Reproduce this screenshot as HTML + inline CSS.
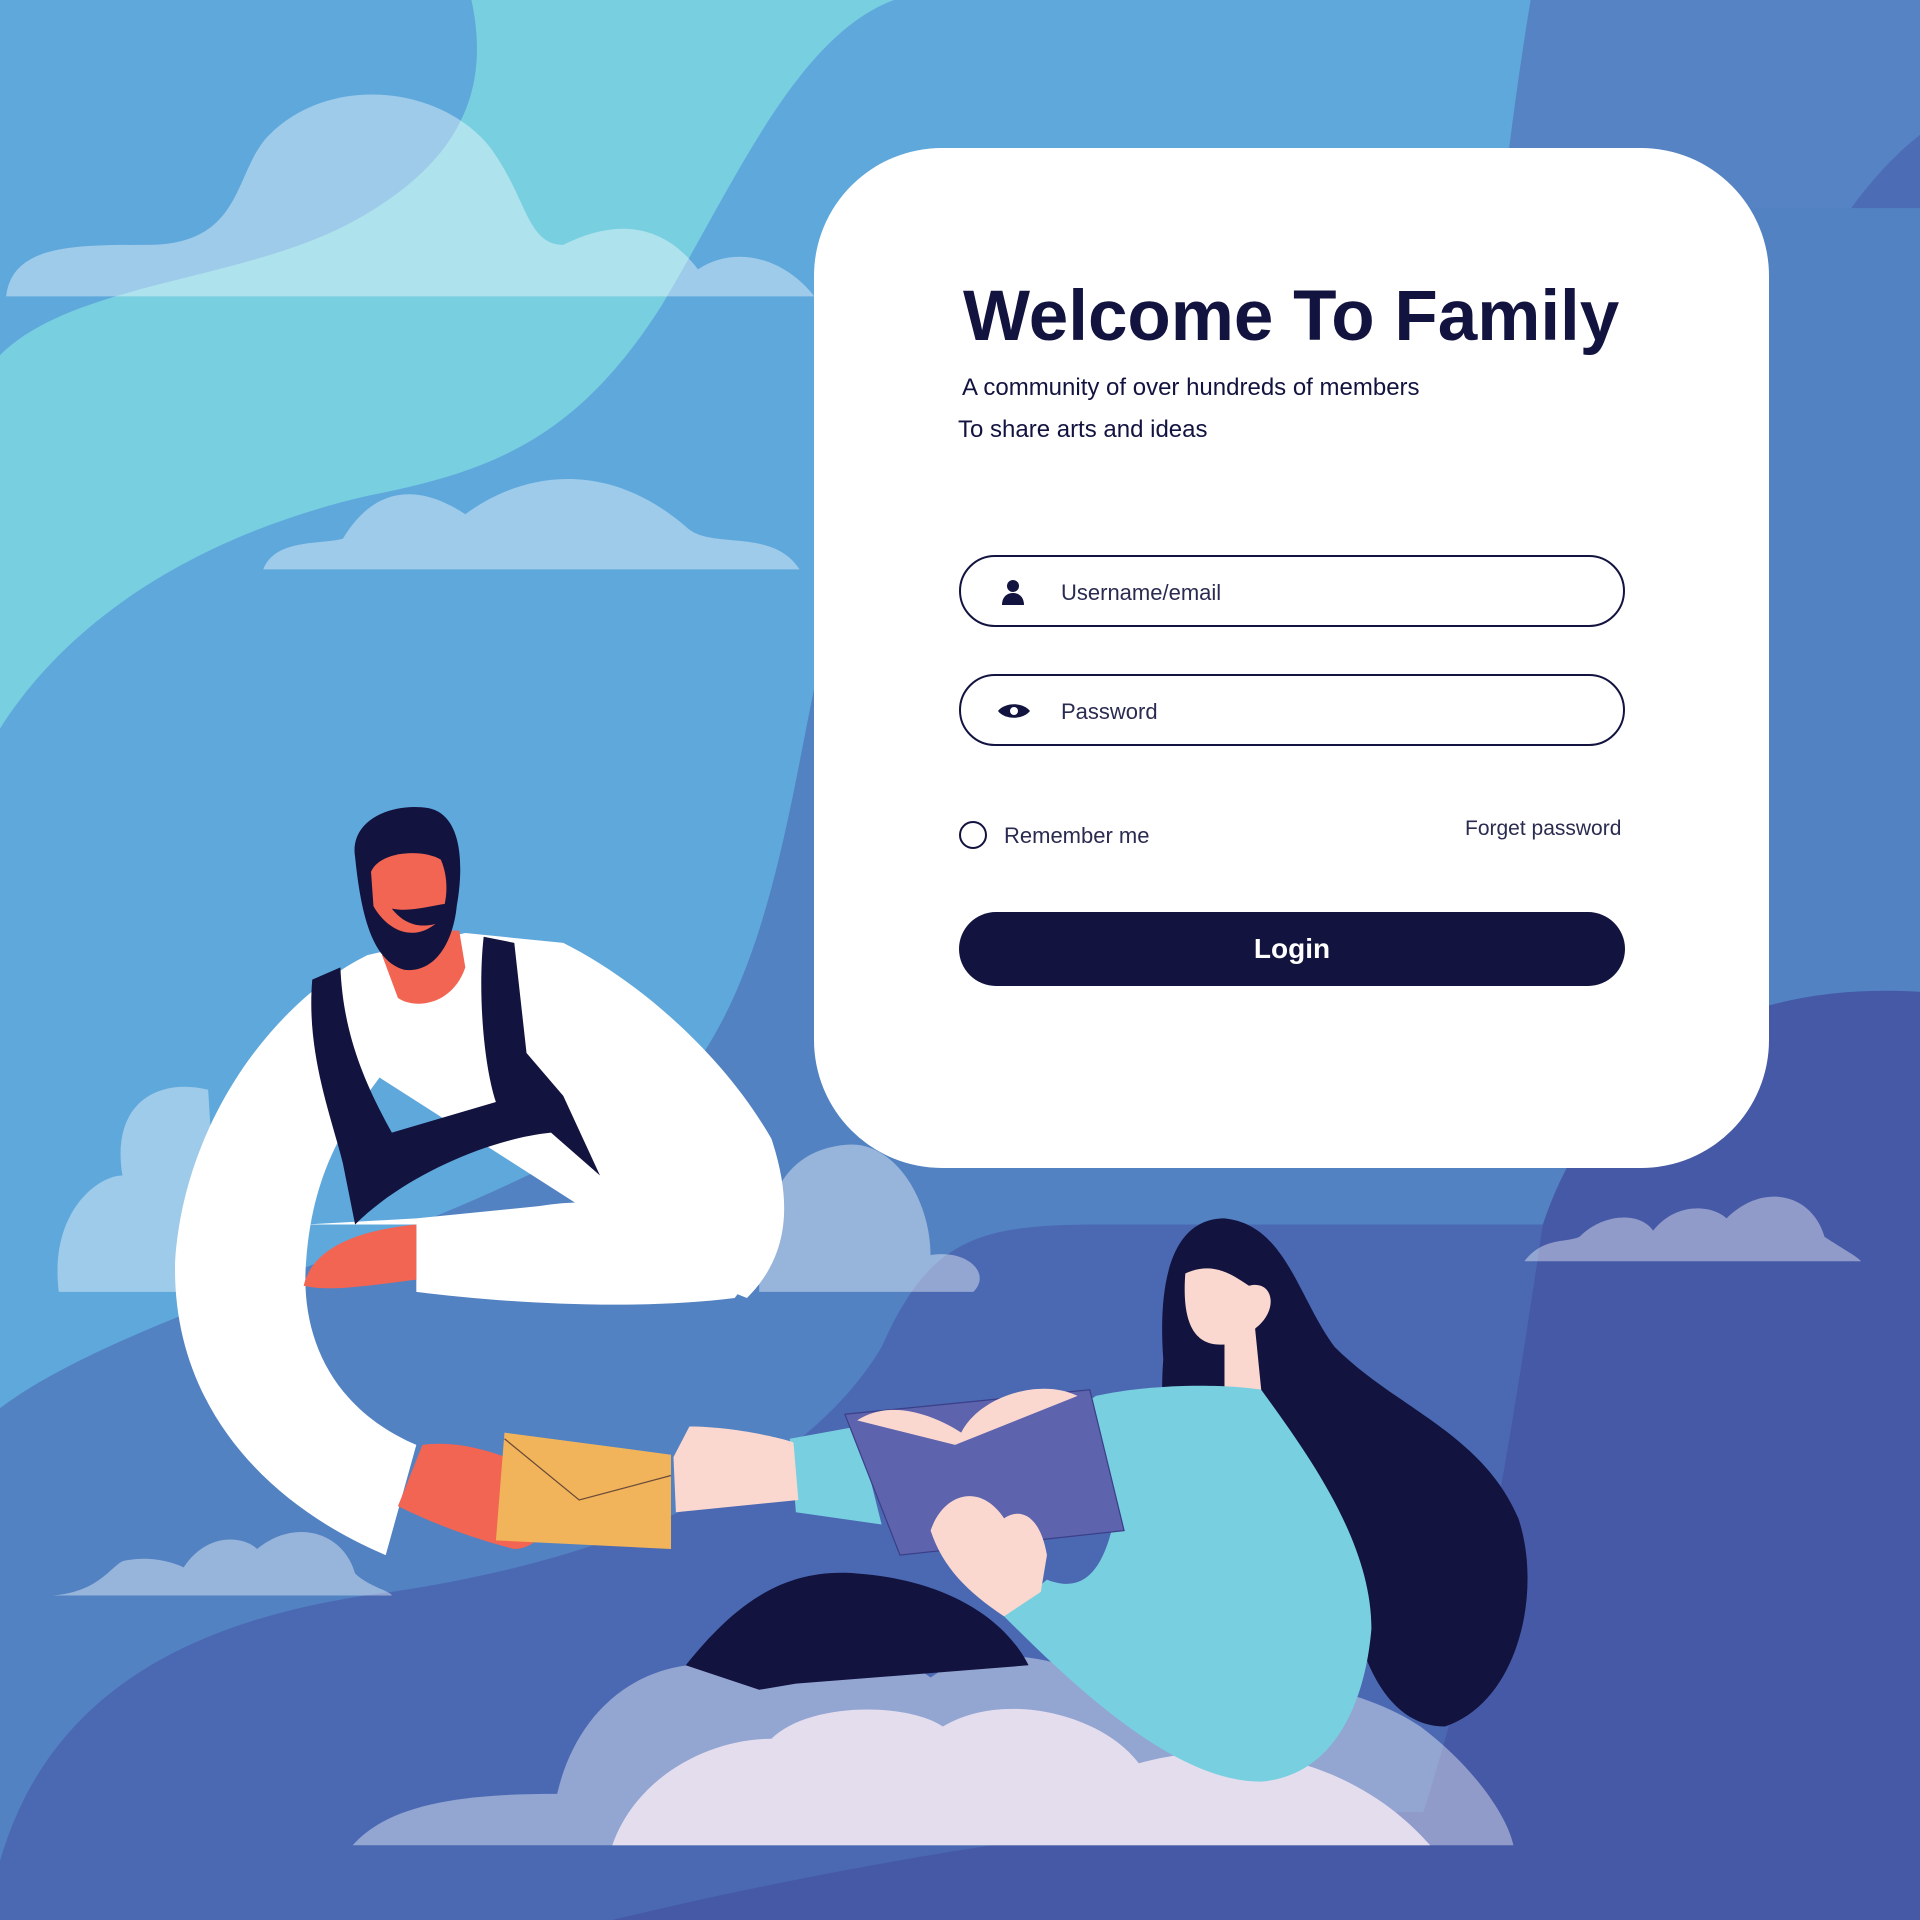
<!DOCTYPE html>
<html><head><meta charset="utf-8"><style>
html,body{margin:0;padding:0;width:1920px;height:1920px;overflow:hidden;background:#5fa8dc;font-family:"Liberation Sans",sans-serif}
svg.bg{position:absolute;left:0;top:0;width:1920px;height:1920px}
.card{position:absolute;left:814px;top:148px;width:955px;height:1020px;background:#fff;border-radius:128px}
.t{position:absolute;color:#12133f}
h1{position:absolute;left:963px;top:276px;margin:0;font-size:71px;font-weight:bold;color:#12133f;letter-spacing:0}
.inp{position:absolute;left:959px;width:666px;height:72px;border:2px solid #12133f;border-radius:38px;box-sizing:border-box}
.ph{position:absolute;left:100px;top:23px;font-size:22px;color:#2a2b50}
.btn{position:absolute;left:959px;top:912px;width:666px;height:74px;background:#12133f;border-radius:37px;color:#fff;font-size:28px;font-weight:bold;text-align:center;line-height:74px}
</style></head><body>
<svg class="bg" viewBox="0 0 1568 1568" preserveAspectRatio="none">
<rect width="1568" height="1568" fill="#5fa8dc"/>
<path d="M385,0 L730,0 C650,30 600,150 540,250 C470,360 400,385 300,405 C170,435 60,500 0,595 L0,290 C60,230 200,230 290,180 C380,130 400,70 385,0Z" fill="#78cfe0"/>
<path d="M1250,0 L1568,0 L1568,1568 L1100,1568 C1150,1000 1200,300 1250,0Z" fill="#5583c3"/>
<path d="M1568,110 C1480,180 1420,330 1390,480 L1568,480Z" fill="#4d6cb6"/>
<path d="M0,1150 C120,1060 420,1000 560,880 C640,780 650,600 680,500 C700,420 720,260 760,170 L1568,170 L1568,1568 L0,1568Z" fill="#5282c2"/>
<path d="M0,1568 L0,1520 C40,1380 160,1320 320,1300 C520,1270 660,1200 720,1100 C760,1010 800,1000 900,1000 L1568,1000 L1568,1568Z" fill="#4b69b3"/>
<path d="M1568,810 C1400,800 1300,880 1260,1000 C1230,1200 1200,1400 1130,1568 L1568,1568Z" fill="#4659a6"/>
<path d="M500,1568 C700,1520 850,1500 1000,1480 L1568,1480 L1568,1568Z" fill="#4659a6"/>
<g fill="#ffffff" opacity="0.4">
<path d="M5,242 C10,200 60,200 120,200 C200,200 190,140 220,110 C270,60 360,70 400,120 C430,160 430,200 460,200 C500,180 540,180 570,220 C600,200 640,210 665,242Z"/>
<path d="M215,465 C225,440 260,445 280,440 C310,390 350,400 380,420 C420,390 490,370 560,430 C580,450 630,430 653,465Z"/>
<path d="M48,1055 C40,990 80,960 100,960 C90,900 130,880 170,890 L180,1055Z"/>
<path d="M620,1055 C620,980 640,940 690,935 C730,930 760,980 760,1025 C790,1020 810,1040 795,1055Z"/>
<path d="M43,1303 C80,1300 90,1280 100,1275 C120,1270 140,1275 150,1280 C170,1250 200,1255 210,1265 C240,1240 280,1250 290,1285 C300,1295 320,1300 320,1303Z"/>
<path d="M1245,1030 C1260,1010 1280,1015 1290,1010 C1310,990 1340,990 1350,1005 C1370,980 1400,985 1410,995 C1440,965 1480,975 1490,1010 C1505,1020 1515,1025 1520,1030Z"/>
<path d="M288,1507 C320,1470 390,1465 455,1465 C470,1400 520,1350 600,1360 C650,1330 720,1340 760,1370 C800,1340 880,1350 920,1390 C1000,1360 1100,1370 1160,1410 C1200,1440 1230,1480 1236,1507Z"/>
</g>
<path d="M500,1507 C520,1450 580,1420 630,1420 C660,1390 740,1390 770,1410 C820,1380 900,1400 930,1440 C1000,1420 1100,1430 1168,1507Z" fill="#e3ddee"/>
<path d="M300,780 C220,820 150,920 143,1030 C140,1150 220,1230 315,1270 L340,1180 C270,1150 245,1090 250,1030 C255,960 280,920 310,880 L560,1040 L610,1060 C640,1030 650,990 630,930 C590,860 520,800 460,770 L380,762Z" fill="#fff"/>
<path d="M250,1000 L340,1000 L340,1055 C420,1065 520,1070 600,1060 L630,1020 C560,990 500,975 440,985 L340,995Z" fill="#fff"/>
<path d="M255,800 C250,860 270,910 280,950 L290,1000 C330,960 400,930 450,925 L490,960 L460,895 L430,860 L420,770 L395,765 C390,810 395,870 405,900 L320,925 C295,880 280,840 278,790Z" fill="#12133f"/>
<path d="M312,780 L325,815 C340,825 370,820 380,790 L375,760 L320,760Z" fill="#f26552"/>
<path d="M290,700 C285,670 320,655 350,660 C375,665 380,700 373,740 C370,770 355,795 330,792 C305,785 295,750 290,700Z" fill="#12133f"/>
<path d="M303,712 C310,695 345,693 360,702 C368,720 365,745 355,755 C335,770 315,758 305,740Z" fill="#f26552"/>
<path d="M320,742 C335,745 350,740 365,738 L362,752 C345,760 330,755 320,742Z" fill="#12133f"/>
<path d="M248,1050 C255,1020 290,1005 340,1000 L340,1045 C300,1050 270,1055 248,1050Z" fill="#f26552"/>
<path d="M345,1180 C380,1175 420,1190 455,1210 C460,1240 440,1265 420,1265 C380,1255 345,1240 325,1230Z" fill="#f26552"/>
<path d="M412,1170 L548,1188 L548,1265 L405,1258Z" fill="#f2b45a"/>
<path d="M412,1175 L473,1225 L548,1205" fill="none" stroke="#6a4a3a" stroke-width="1"/>
<path d="M1000,995 C960,995 945,1040 950,1110 C945,1180 960,1220 1000,1220 L1100,1270 C1100,1320 1120,1410 1180,1410 C1240,1390 1260,1300 1240,1240 C1210,1170 1140,1150 1090,1100 C1060,1060 1050,1000 1000,995Z" fill="#12133f"/>
<path d="M968,1040 C965,1080 975,1100 1000,1098 L1000,1135 L1030,1135 L1025,1085 C1045,1070 1040,1045 1020,1050 C1005,1040 990,1030 968,1040Z" fill="#fbd8cf"/>
<path d="M895,1140 C940,1130 1000,1130 1030,1135 C1070,1190 1120,1260 1120,1330 C1115,1390 1090,1450 1030,1455 C960,1455 880,1380 820,1320 L855,1290 C880,1300 900,1290 910,1240 L880,1150Z" fill="#78cfe0"/>
<path d="M645,1175 L700,1165 L720,1245 L650,1235Z" fill="#78cfe0"/>
<path d="M563,1165 C600,1165 640,1175 648,1178 L652,1225 L552,1235 L550,1190Z" fill="#fbd8cf"/>
<path d="M690,1155 L890,1135 L918,1250 L735,1270Z" fill="#5e63ad" stroke="#3a3f88" stroke-width="1"/>
<path d="M700,1160 C730,1140 770,1160 785,1170 C800,1140 850,1125 880,1140 L780,1180Z" fill="#fbd8cf"/>
<path d="M760,1250 C770,1220 800,1210 820,1240 C835,1230 850,1240 855,1270 L850,1300 L820,1320 C790,1300 770,1280 760,1250Z" fill="#fbd8cf"/>
<path d="M560,1360 C600,1310 640,1280 700,1285 C770,1290 820,1320 840,1360 L650,1375 L620,1380Z" fill="#12133f"/>
</svg>
<div class="card"></div>
<h1>Welcome To Family</h1>
<div class="t" style="left:962px;top:374px;font-size:24px">A community of over hundreds of members</div>
<div class="t" style="left:958px;top:416px;font-size:24px">To share arts and ideas</div>
<div class="inp" style="top:555px">
 <svg style="position:absolute;left:40px;top:22px" width="24" height="26" viewBox="0 0 24 26"><circle cx="12" cy="7" r="6" fill="#12133f"/><path d="M1,26 C1,18 6,14 12,14 C18,14 23,18 23,26Z" fill="#12133f"/></svg>
 <div class="ph">Username/email</div></div>
<div class="inp" style="top:674px">
 <svg style="position:absolute;left:36px;top:25px" width="34" height="20" viewBox="0 0 34 20"><path d="M1,10 C8,1 26,1 33,10 C26,19 8,19 1,10Z" fill="#12133f"/><circle cx="17" cy="10" r="4" fill="#fff"/></svg>
 <div class="ph">Password</div></div>
<div style="position:absolute;left:959px;top:821px;width:28px;height:28px;border:2px solid #12133f;border-radius:50%;box-sizing:border-box"></div>
<div class="t" style="left:1004px;top:823px;font-size:22px;color:#2a2b50">Remember me</div>
<div class="t" style="left:1465px;top:817px;font-size:21px;color:#2a2b50">Forget password</div>
<div class="btn">Login</div>
</body></html>
